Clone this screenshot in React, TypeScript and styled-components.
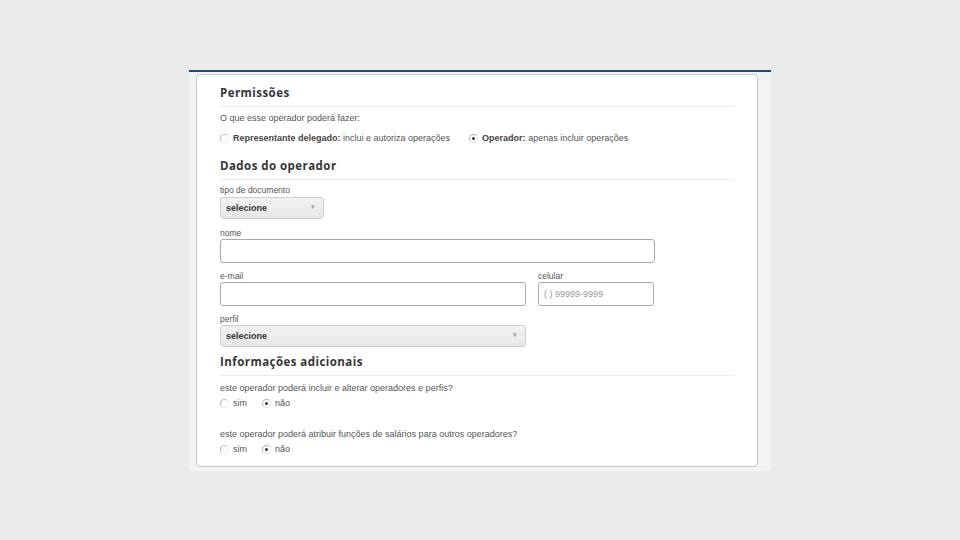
import React, { useState } from "react";
import styled, { createGlobalStyle } from "styled-components";

const GlobalStyle = createGlobalStyle`
  html, body {
    margin: 0;
    padding: 0;
    background: #ebebeb;
  }
  body {
    font-family: "Liberation Sans", Arial, sans-serif;
    color: #555;
  }
`;

const Page = styled.div`
  width: 960px;
  height: 540px;
  padding: 70px 0 0 189px;
  box-sizing: border-box;
`;

const Panel = styled.div`
  width: 582px;
  box-sizing: border-box;
  background: #f3f3f3;
  border-top: 2px solid #1f4d7a;
  padding: 2px 13px 4px 7px;
`;

const Card = styled.div`
  background: #fff;
  border: 1px solid #c6c6c6;
  border-radius: 4px;
  padding: 9px 23px 10px 23px;
`;

const SectionTitle = styled.h2<{ $gap?: number }>`
  margin: ${(p) => p.$gap ?? 0}px 0 0;
  padding-bottom: 4px;
  border-bottom: 1px solid #ececec;
  font-family: "Open Sans", "DejaVu Sans", sans-serif;
  font-weight: 700;
  font-size: 11.5px;
  line-height: 18px;
  letter-spacing: 0.45px;
  color: #363636;
`;

const Text = styled.div<{ $gap?: number }>`
  margin-top: ${(p) => p.$gap ?? 0}px;
  font-size: 9px;
  line-height: 12px;
  color: #555;
`;

const Label = styled.label<{ $gap?: number }>`
  display: block;
  margin-top: ${(p) => p.$gap ?? 0}px;
  font-size: 8.5px;
  line-height: 12px;
  color: #555;
`;

const RadioRow = styled.div<{ $gap?: number; $spacing?: number }>`
  display: flex;
  align-items: center;
  gap: ${(p) => p.$spacing ?? 15}px;
  height: 14px;
  margin-top: ${(p) => p.$gap ?? 0}px;
`;

const RadioItem = styled.label`
  display: flex;
  align-items: center;
  gap: 4px;
  font-size: 9px;
  color: #555;
  cursor: pointer;
  b {
    font-weight: 700;
    color: #444;
  }
`;

const RadioDot = styled.span<{ $on: boolean }>`
  position: relative;
  width: 7px;
  height: 7px;
  border-radius: 50%;
  border: 1px solid;
  border-color: ${(p) =>
    p.$on ? "#9fb6cc #e4e4e4 #e4e4e4 #a9b9c9" : "#c4c4c4 #ececec #ececec #b4b4b4"};
  background: #fff;
  flex-shrink: 0;

  &::after {
    content: "";
    display: ${(p) => (p.$on ? "block" : "none")};
    position: absolute;
    left: 2px;
    top: 2px;
    width: 3px;
    height: 3px;
    border-radius: 50%;
    background: #333;
  }
`;

const SelectBox = styled.div<{ $w: number; $gap?: number }>`
  position: relative;
  width: ${(p) => p.$w}px;
  height: 22px;
  margin-top: ${(p) => p.$gap ?? 0}px;
  box-sizing: border-box;
  border: 1px solid #cfcfcf;
  border-radius: 3px;
  background: linear-gradient(#f2f2f2, #e8e8e8);
  display: flex;
  align-items: center;
  padding-left: 5px;
  font-size: 9px;
  font-weight: 700;
  color: #333;

  &::after {
    content: "▾";
    position: absolute;
    right: 8px;
    top: 5px;
    font-size: 7px;
    color: #999;
    font-weight: 400;
  }
`;

const Input = styled.input<{ $w: number }>`
  display: block;
  width: ${(p) => p.$w}px;
  height: 24px;
  box-sizing: border-box;
  margin: 0;
  border: 1px solid #a9a9a9;
  border-radius: 3px;
  padding: 0 5px;
  font-family: "Liberation Sans", Arial, sans-serif;
  font-size: 9px;
  color: #555;
  outline: none;

  &::placeholder {
    color: #999;
  }
`;

const FieldRow = styled.div<{ $gap?: number }>`
  display: grid;
  grid-template-columns: 306px 116px;
  column-gap: 12px;
  margin-top: ${(p) => p.$gap ?? 0}px;
`;

const Field = styled.div``;

type Choice = "sim" | "nao";

const YesNo: React.FC<{ value: Choice; onChange: (v: Choice) => void; gap: number }> = ({
  value,
  onChange,
  gap,
}) => (
  <RadioRow $gap={gap} $spacing={15}>
    <RadioItem onClick={() => onChange("sim")}>
      <RadioDot $on={value === "sim"} />
      sim
    </RadioItem>
    <RadioItem onClick={() => onChange("nao")}>
      <RadioDot $on={value === "nao"} />
      não
    </RadioItem>
  </RadioRow>
);

const App: React.FC = () => {
  const [role, setRole] = useState<"delegado" | "operador">("operador");
  const [canEdit, setCanEdit] = useState<Choice>("nao");
  const [canAssign, setCanAssign] = useState<Choice>("nao");

  return (
    <>
      <GlobalStyle />
      <Page>
        <Panel>
          <Card>
            <SectionTitle>Permissões</SectionTitle>
            <Text $gap={5}>O que esse operador poderá fazer:</Text>
            <RadioRow $gap={7} $spacing={19}>
              <RadioItem onClick={() => setRole("delegado")}>
                <RadioDot $on={role === "delegado"} />
                <span>
                  <b>Representante delegado:</b> inclui e autoriza operações
                </span>
              </RadioItem>
              <RadioItem onClick={() => setRole("operador")}>
                <RadioDot $on={role === "operador"} />
                <span>
                  <b>Operador:</b> apenas incluir operações
                </span>
              </RadioItem>
            </RadioRow>

            <SectionTitle $gap={12}>Dados do operador</SectionTitle>
            <Label $gap={4}>tipo de documento</Label>
            <SelectBox $w={104} $gap={1}>selecione</SelectBox>

            <Label $gap={8}>nome</Label>
            <Input $w={435} />

            <FieldRow $gap={7}>
              <Field>
                <Label>e-mail</Label>
                <Input $w={306} />
              </Field>
              <Field>
                <Label>celular</Label>
                <Input $w={116} placeholder="( ) 99999-9999" />
              </Field>
            </FieldRow>

            <Label $gap={7}>perfil</Label>
            <SelectBox $w={306}>selecione</SelectBox>

            <SectionTitle $gap={6}>Informações adicionais</SectionTitle>
            <Text $gap={6}>este operador poderá incluir e alterar operadores e perfis?</Text>
            <YesNo value={canEdit} onChange={setCanEdit} gap={2} />
            <Text $gap={18}>este operador poderá atribuir funções de salários para outros operadores?</Text>
            <YesNo value={canAssign} onChange={setCanAssign} gap={2} />
          </Card>
        </Panel>
      </Page>
    </>
  );
};

export default App;
